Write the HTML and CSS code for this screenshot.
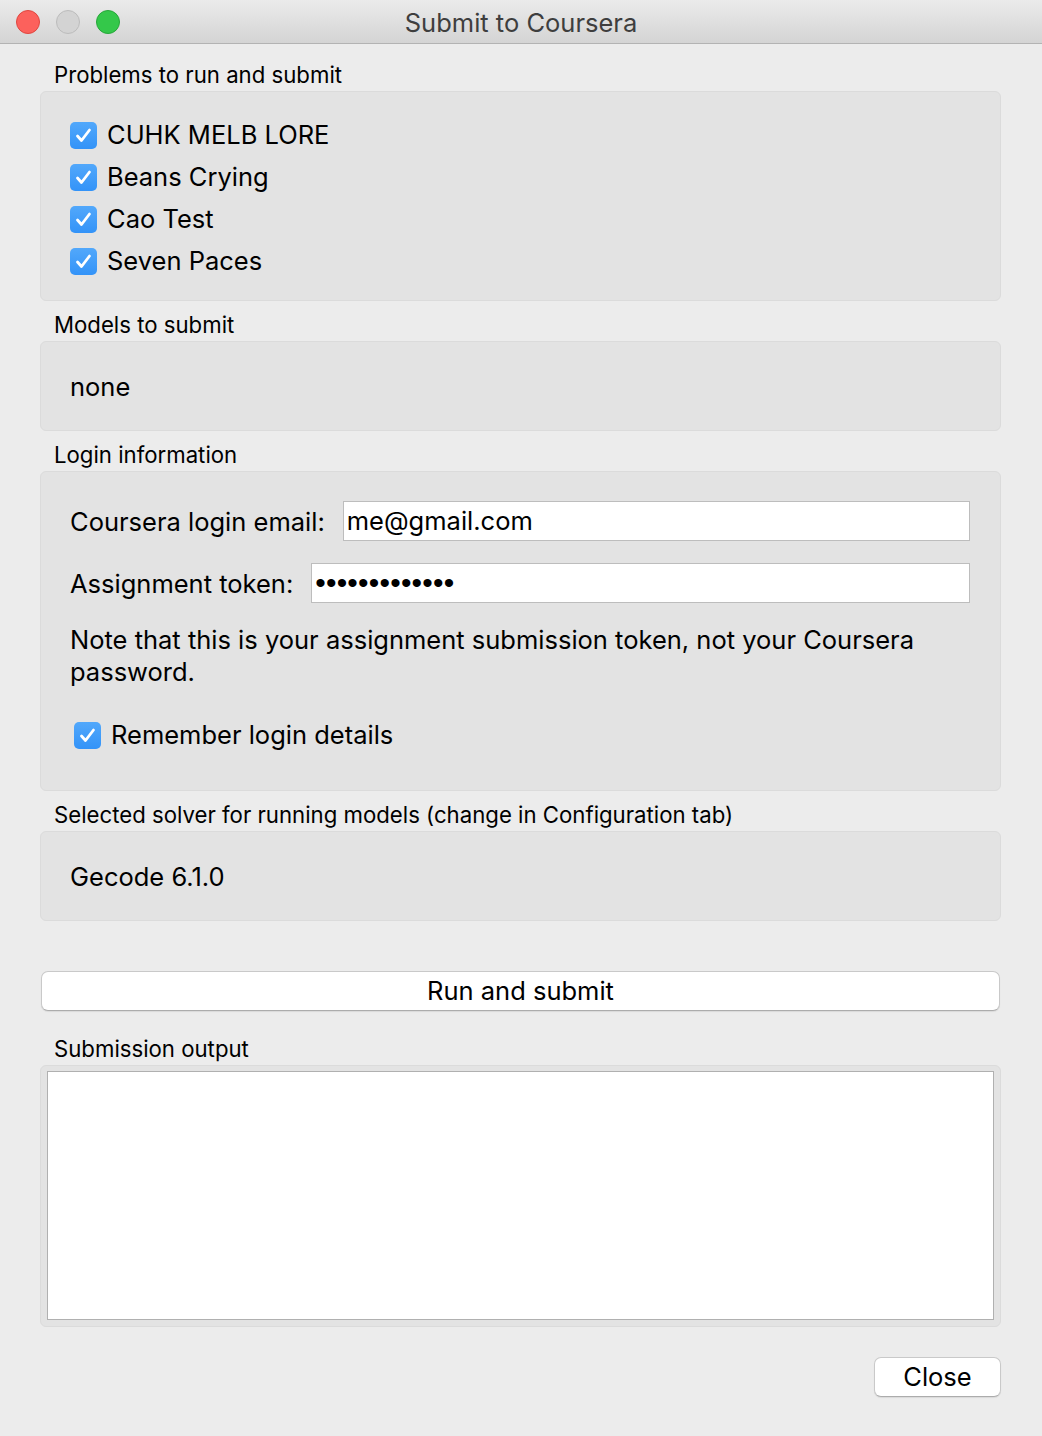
FILE: index.html
```html
<!DOCTYPE html>
<html>
<head>
<meta charset="utf-8">
<title>Submit to Coursera</title>
<link rel="stylesheet" href="styles.css">
</head>
<body>
<div class="window">
  <div class="titlebar">
    <div class="lights">
      <span class="light red"></span>
      <span class="light gray"></span>
      <span class="light green"></span>
    </div>
    <div class="title">Submit to Coursera</div>
  </div>
  <div class="content">
    <div class="label">Problems to run and submit</div>
    <div class="group problems">
      <div class="check"><span class="box"><svg viewBox="0 0 27 27" width="27" height="27"><path d="M7.5 14 L11.5 18.5 L19.5 8" fill="none" stroke="#fff" stroke-width="2.8" stroke-linecap="round" stroke-linejoin="round"/></svg></span>CUHK MELB LORE</div>
      <div class="check"><span class="box"><svg viewBox="0 0 27 27" width="27" height="27"><path d="M7.5 14 L11.5 18.5 L19.5 8" fill="none" stroke="#fff" stroke-width="2.8" stroke-linecap="round" stroke-linejoin="round"/></svg></span>Beans Crying</div>
      <div class="check"><span class="box"><svg viewBox="0 0 27 27" width="27" height="27"><path d="M7.5 14 L11.5 18.5 L19.5 8" fill="none" stroke="#fff" stroke-width="2.8" stroke-linecap="round" stroke-linejoin="round"/></svg></span>Cao Test</div>
      <div class="check"><span class="box"><svg viewBox="0 0 27 27" width="27" height="27"><path d="M7.5 14 L11.5 18.5 L19.5 8" fill="none" stroke="#fff" stroke-width="2.8" stroke-linecap="round" stroke-linejoin="round"/></svg></span>Seven Paces</div>
    </div>

    <div class="label gap">Models to submit</div>
    <div class="group single">none</div>

    <div class="label gap">Login information</div>
    <div class="group login">
      <div class="row">
        <span class="rowlabel">Coursera login email:</span>
        <div class="field">me@gmail.com</div>
      </div>
      <div class="row second">
        <span class="rowlabel">Assignment token:</span>
        <div class="field dots">•••••••••••••</div>
      </div>
      <p class="note">Note that this is your assignment submission token, not your Coursera password.</p>
      <div class="check remember"><span class="box"><svg viewBox="0 0 27 27" width="27" height="27"><path d="M7.5 14 L11.5 18.5 L19.5 8" fill="none" stroke="#fff" stroke-width="2.8" stroke-linecap="round" stroke-linejoin="round"/></svg></span>Remember login details</div>
    </div>

    <div class="label gap">Selected solver for running models (change in Configuration tab)</div>
    <div class="group single">Gecode 6.1.0</div>

    <div class="button wide">Run and submit</div>

    <div class="label gap2">Submission output</div>
    <div class="group output">
      <div class="textarea"></div>
    </div>

    <div class="footer">
      <div class="button close">Close</div>
    </div>
  </div>
</div>
</body>
</html>
```

FILE: styles.css
```css
* { box-sizing: border-box; }
html, body {
  margin: 0;
  padding: 0;
}
body {
  width: 1042px;
  height: 1436px;
  background: #ececec;
  font-family: Inter, "Liberation Sans", Arial, sans-serif;
  color: #000;
  overflow: hidden;
}
.window {
  width: 1042px;
  height: 1436px;
  background: #ececec;
  display: flex;
  flex-direction: column;
}
.titlebar {
  height: 44px;
  flex: none;
  background: linear-gradient(#ebebeb, #d4d4d4);
  border-bottom: 1px solid #b3b3b3;
  display: flex;
  align-items: center;
  position: relative;
}
.lights {
  position: absolute;
  left: 16px;
  top: 10px;
  display: flex;
  gap: 16px;
}
.light {
  width: 24px;
  height: 24px;
  border-radius: 50%;
  display: block;
}
.light.red { background: #fc615c; border: 1px solid #e0463f; }
.light.gray { background: #d3d3d3; border: 1px solid #bcbcbc; }
.light.green { background: #34c84a; border: 1px solid #27a73a; }
.title {
  flex: 1;
  text-align: center;
  font-size: 25.5px;
  color: #3e3e3e;
  padding-top: 1px;
}
.content {
  padding: 16px 41px 0 40px;
  display: flex;
  flex-direction: column;
}
.label {
  font-size: 22.2px;
  line-height: 30px;
  height: 30px;
  padding-left: 14px;
  margin-bottom: 1px;
}
.label.gap { margin-top: 9px; }
.label.gap2 { margin-top: 23px; }
.group {
  background: #e3e3e3;
  border: 1px solid #dbdbdb;
  border-radius: 6px;
  font-size: 25.5px;
}
.problems {
  height: 210px;
  padding: 22px 0 0 29px;
}
.check {
  display: flex;
  align-items: center;
  height: 42px;
  line-height: 42px;
}
.box {
  width: 27px;
  height: 27px;
  border-radius: 5px;
  background: linear-gradient(#52a8fb, #3393f8);
  margin-right: 10px;
  display: block;
  flex: none;
}
.box svg { display: block; }
.single {
  height: 90px;
  padding-left: 29px;
  display: flex;
  align-items: center;
}
.login {
  height: 320px;
  padding: 29px 30px 0 29px;
}
.row {
  display: flex;
  align-items: center;
  height: 40px;
}
.row.second { margin-top: 22px; }
.rowlabel {
  white-space: nowrap;
  margin-right: 18px;
}
.field {
  flex: 1;
  height: 40px;
  background: #fff;
  border: 1px solid #bdbdbd;
  line-height: 38px;
  padding-left: 3px;
}
.field.dots {
  font-family: "Liberation Sans", Arial, sans-serif;
  font-size: 30px;
  letter-spacing: 0.2px;
  padding-left: 3px;
}
.note {
  margin: 21px 0 0 0;
  line-height: 32px;
}
.remember {
  margin-top: 26px;
  padding-left: 4px;
}
.button {
  background: #fff;
  border: 1px solid #c9c9c9;
  border-bottom-color: #acacac;
  border-radius: 7px;
  box-shadow: 0 1px 1px rgba(0,0,0,0.08);
  height: 40px;
  line-height: 38px;
  text-align: center;
  font-size: 25.5px;
}
.wide {
  margin: 50px 1px 0 1px;
}
.output {
  height: 262px;
  padding: 5px 6px 6px 6px;
}
.textarea {
  height: 100%;
  background: #fff;
  border: 1px solid #b0b0b0;
}
.footer {
  display: flex;
  justify-content: flex-end;
  margin-top: 30px;
}
.close {
  width: 127px;
}
```
